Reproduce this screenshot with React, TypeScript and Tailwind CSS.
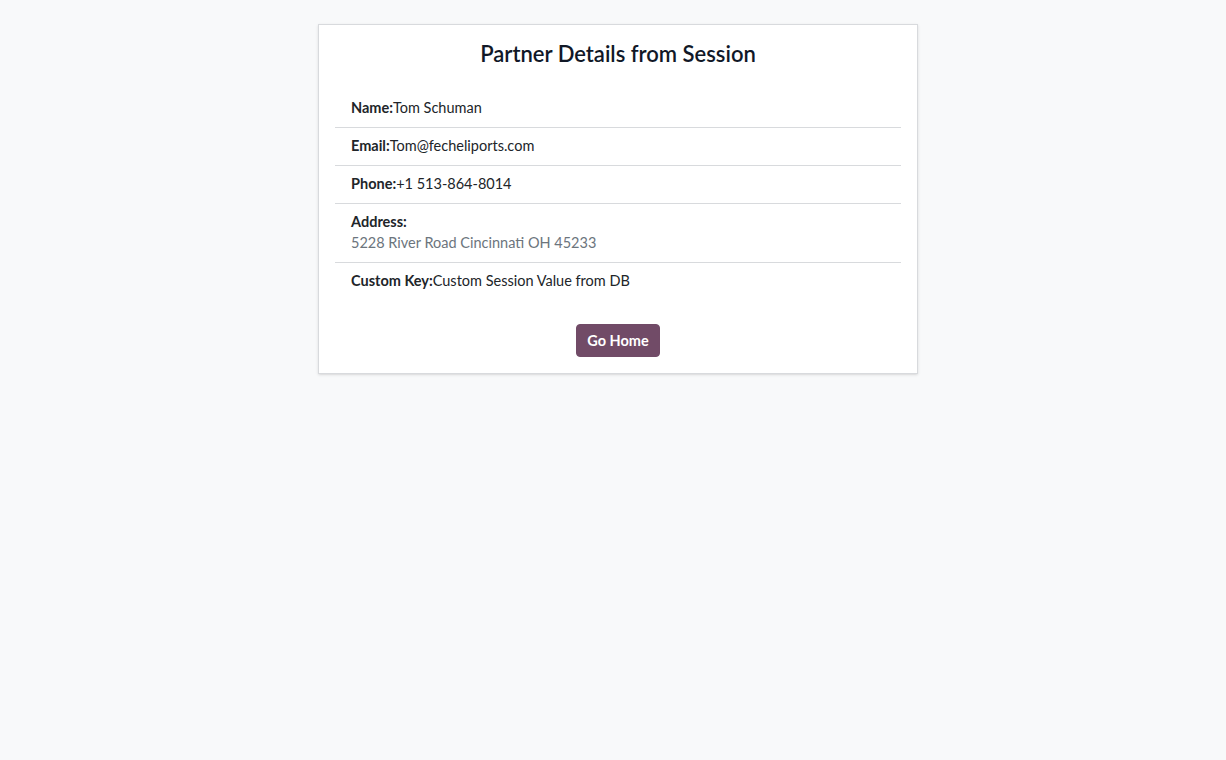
import React from "react";

const rows = [
  { label: "Name:", value: "Tom Schuman" },
  { label: "Email:", value: "Tom@fecheliports.com" },
  { label: "Phone:", value: "+1 513-864-8014" },
];

export default function App() {
  return (
    <div className="min-h-[760px] bg-[#f8f9fa] pt-6 pl-[10px] font-['Lato','Noto_Sans',sans-serif] text-[14.5px] leading-[21px] text-[#212529]">
      <div className="mx-auto w-[600px] border border-[#d8dadd] bg-white p-4 shadow-sm">
        <h4 className="mb-6 text-center text-[22px] leading-[25px] font-semibold text-[#111827]">
          Partner Details from Session
        </h4>

        <ul className="flex flex-col">
          {rows.map((r) => (
            <li key={r.label} className="border-b border-[#d8dadd] px-4 pt-[7px] pb-[9px]">
              <strong className="font-bold">{r.label}</strong>
              {r.value}
            </li>
          ))}
          <li className="border-b border-[#d8dadd] px-4 pt-[7px] pb-[9px]">
            <strong className="font-bold">Address:</strong>
            <div className="text-[#6c757d]">5228 River Road Cincinnati OH 45233</div>
          </li>
          <li className="px-4 pt-[7px] pb-[9px]">
            <strong className="font-bold">Custom Key:</strong>
            Custom Session Value from DB
          </li>
        </ul>

        <div className="mt-6 flex justify-center">
          <button className="h-[33px] rounded-[4px] border border-[#714b67] bg-[#714b67] px-[10px] text-[14.5px] leading-[21px] font-bold text-white">
            Go Home
          </button>
        </div>
      </div>
    </div>
  );
}
